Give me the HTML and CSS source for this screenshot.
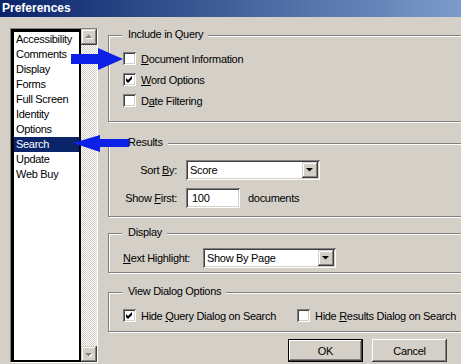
FILE: index.html
```html
<!DOCTYPE html>
<html>
<head>
<meta charset="utf-8">
<title>Preferences</title>
<link rel="stylesheet" href="styles.css">
</head>
<body>
<div class="dialog">
  <div class="titlebar">Preferences</div>
  <div class="main">
    <div class="listframe">
      <ul class="list">
        <li>Accessibility</li>
        <li>Comments</li>
        <li>Display</li>
        <li>Forms</li>
        <li>Full Screen</li>
        <li>Identity</li>
        <li>Options</li>
        <li class="sel">Search</li>
        <li>Update</li>
        <li>Web Buy</li>
      </ul>
      <div class="scrollbar">
        <div class="sbtn"><svg width="12" height="12" viewBox="0 0 12 12"><polygon points="3,8 10,8 6.5,4.5" fill="#fff"/><polygon points="2,7 9,7 5.5,3.5" fill="#808080"/></svg></div>
        <div class="track"></div>
        <div class="sbtn"><svg width="12" height="12" viewBox="0 0 12 12"><polygon points="3,6 10,6 6.5,9.5" fill="#fff"/><polygon points="2,5 9,5 5.5,8.5" fill="#808080"/></svg></div>
      </div>
    </div>
    <div class="panel">
      <div class="group g1">
        <div class="legend">Include in Query</div>
        <div class="checks">
          <div class="check"><span class="box"></span><span><u>D</u>ocument Information</span></div>
          <div class="check"><span class="box"><svg width="9" height="9" viewBox="0 0 9 9"><polygon points="1,3 3,5 7,1 7,4 3,8 1,6" fill="#000"/></svg></span><span><u>W</u>ord Options</span></div>
          <div class="check"><span class="box"></span><span>D<u>a</u>te Filtering</span></div>
        </div>
      </div>
      <div class="group g2">
        <div class="legend">Results</div>
        <div class="form">
          <span class="lbl">Sort <u>B</u>y:</span>
          <div class="select w134"><span class="val">Score</span><span class="dd"><svg width="12" height="12" viewBox="0 0 12 12"><polygon points="2,4 9,4 5.5,7.5" fill="#000"/></svg></span></div>
          <span class="lbl">Show <u>F</u>irst:</span>
          <div class="inrow"><div class="field">100</div><span>documents</span></div>
        </div>
      </div>
      <div class="group g3">
        <div class="legend">Display</div>
        <div class="hrow">
          <span class="lbl2"><u>N</u>ext Highlight:</span>
          <div class="select w133"><span class="val">Show By Page</span><span class="dd"><svg width="12" height="12" viewBox="0 0 12 12"><polygon points="2,4 9,4 5.5,7.5" fill="#000"/></svg></span></div>
        </div>
      </div>
      <div class="group g4">
        <div class="legend">View Dialog Options</div>
        <div class="vrow">
          <div class="check c1"><span class="box"><svg width="9" height="9" viewBox="0 0 9 9"><polygon points="1,3 3,5 7,1 7,4 3,8 1,6" fill="#000"/></svg></span><span>Hide <u>Q</u>uery Dialog on Search</span></div>
          <div class="check"><span class="box"></span><span>Hide <u>R</u>esults Dialog on Search</span></div>
        </div>
      </div>
      <div class="buttons">
        <button class="btn default">OK</button>
        <button class="btn">Cancel</button>
      </div>
    </div>
  </div>
  <svg class="arrow a1" width="53" height="25" viewBox="0 0 53 25"><polygon points="0,7 27,7 27,1 52,12 27,23 27,17 0,17" fill="#0c20e8"/></svg>
  <svg class="arrow a2" width="58" height="20" viewBox="0 0 58 20"><polygon points="1,9 28,1 28,5 57,5 57,13 28,13 28,18" fill="#0c20e8"/></svg>
</div>
</body>
</html>
```

FILE: styles.css
```css
html, body {
  margin: 0;
  padding: 0;
  background: #d4d0c8;
  overflow: hidden;
}
.dialog {
  position: relative;
  width: 461px;
  height: 364px;
  overflow: hidden;
  background: #d4d0c8;
  font-family: "Liberation Sans", Arial, sans-serif;
  font-size: 11px;
  letter-spacing: -0.3px;
  color: #000;
}
.titlebar {
  height: 17px;
  line-height: 17px;
  padding-left: 2px;
  color: #fff;
  font-weight: bold;
  font-size: 12px;
  letter-spacing: 0;
  background: linear-gradient(90deg, #0a246a 0, #a6caf0 640px);
}
.main {
  display: flex;
  height: 347px;
}
.listframe {
  box-sizing: border-box;
  margin: 11px 0 0 10px;
  height: 335px;
  display: flex;
  border-top: 1px solid #808080;
  border-left: 1px solid #808080;
  border-right: 1px solid #fff;
  border-bottom: 1px solid #fff;
}
.list {
  box-sizing: border-box;
  width: 70px;
  height: 333px;
  margin: 0;
  padding: 0;
  list-style: none;
  background: #fff;
  border-style: solid;
  border-color: #000;
  border-width: 3px 2px 2px 3px;
}
.list li {
  height: 15px;
  line-height: 15px;
  padding-left: 2px;
  white-space: nowrap;
}
.list li.sel {
  background: #0a246a;
  color: #fff;
}
.scrollbar {
  width: 16px;
  height: 333px;
  display: flex;
  flex-direction: column;
}
.sbtn {
  width: 16px;
  height: 16px;
  box-sizing: border-box;
  background: #d4d0c8;
  display: flex;
  align-items: center;
  justify-content: center;
  box-shadow: inset -1px -1px #404040, inset 1px 1px #d4d0c8, inset -2px -2px #808080, inset 2px 2px #fff;
}
.track {
  flex: 1;
  background: repeating-conic-gradient(#fff 0 25%, #d4d0c8 0 50%) 0 0 / 2px 2px;
}
.panel {
  flex: 1;
  margin-left: 10px;
  display: flex;
  flex-direction: column;
}
.group {
  box-sizing: border-box;
  display: flex;
  flex-direction: column;
  border: 1px solid #808080;
  box-shadow: inset 1px 1px #fff, 1px 1px #fff;
  margin-right: -12px;
  padding-left: 14px;
}
.legend {
  align-self: flex-start;
  margin: -8px 0 0 -1px;
  padding: 0 5px 0 6px;
  line-height: 13px;
  background: #d4d0c8;
  white-space: nowrap;
}
.g1 { margin-top: 18px; height: 87px; }
.g2 { margin-top: 21px; height: 74px; }
.g3 { margin-top: 16px; height: 40px; }
.g4 { margin-top: 19px; height: 40px; }
.checks {
  margin-top: 7px;
  display: flex;
  flex-direction: column;
}
.check {
  height: 21px;
  display: flex;
  align-items: center;
  gap: 5px;
  white-space: nowrap;
}
.box {
  box-sizing: border-box;
  width: 13px;
  height: 13px;
  padding: 2px;
  background: #fff;
  box-shadow: inset 1px 1px #808080, inset -1px -1px #fff, inset 2px 2px #404040, inset -2px -2px #d4d0c8;
  display: flex;
  flex: none;
}
.box svg { display: block; }
.form {
  margin-top: 11px;
  display: grid;
  grid-template-columns: 54px auto;
  column-gap: 9px;
  row-gap: 8px;
  align-items: center;
  justify-items: start;
}
.lbl {
  justify-self: end;
  white-space: nowrap;
}
.select {
  box-sizing: border-box;
  height: 20px;
  padding: 2px;
  display: flex;
  background: #fff;
  box-shadow: inset 1px 1px #808080, inset -1px -1px #fff, inset 2px 2px #404040, inset -2px -2px #d4d0c8;
}
.w134 { width: 134px; }
.w133 { width: 133px; }
.select .val {
  flex: 1;
  padding-left: 2px;
  line-height: 16px;
  white-space: nowrap;
}
.dd {
  width: 16px;
  height: 16px;
  box-sizing: border-box;
  background: #d4d0c8;
  display: flex;
  align-items: center;
  justify-content: center;
  box-shadow: inset -1px -1px #404040, inset 1px 1px #d4d0c8, inset -2px -2px #808080, inset 2px 2px #fff;
}
.inrow {
  display: flex;
  align-items: center;
  gap: 8px;
}
.field {
  box-sizing: border-box;
  width: 54px;
  height: 20px;
  padding-left: 6px;
  line-height: 20px;
  background: #fff;
  box-shadow: inset 1px 1px #808080, inset -1px -1px #fff, inset 2px 2px #404040, inset -2px -2px #d4d0c8;
}
.hrow {
  margin-top: 9px;
  display: flex;
  align-items: center;
}
.lbl2 {
  width: 80px;
  white-space: nowrap;
}
.vrow {
  margin-top: 11px;
  display: flex;
}
.vrow .check { height: 13px; }
.vrow .c1 { width: 174px; }
.buttons {
  margin-top: 7px;
  display: flex;
  justify-content: flex-end;
  gap: 9px;
  padding-right: 14px;
}
.btn {
  box-sizing: border-box;
  width: 75px;
  height: 23px;
  padding: 0;
  margin: 0;
  border: none;
  background: #d4d0c8;
  font: inherit;
  letter-spacing: inherit;
  color: #000;
  box-shadow: inset -1px -1px #404040, inset 1px 1px #fff, inset -2px -2px #808080;
}
.btn.default {
  border: 1px solid #000;
  box-shadow: inset -1px -1px #404040, inset 1px 1px #fff, inset -2px -2px #808080;
}
.arrow {
  position: absolute;
  display: block;
}
.a1 { left: 71px; top: 47px; }
.a2 { left: 72px; top: 134px; }
```
